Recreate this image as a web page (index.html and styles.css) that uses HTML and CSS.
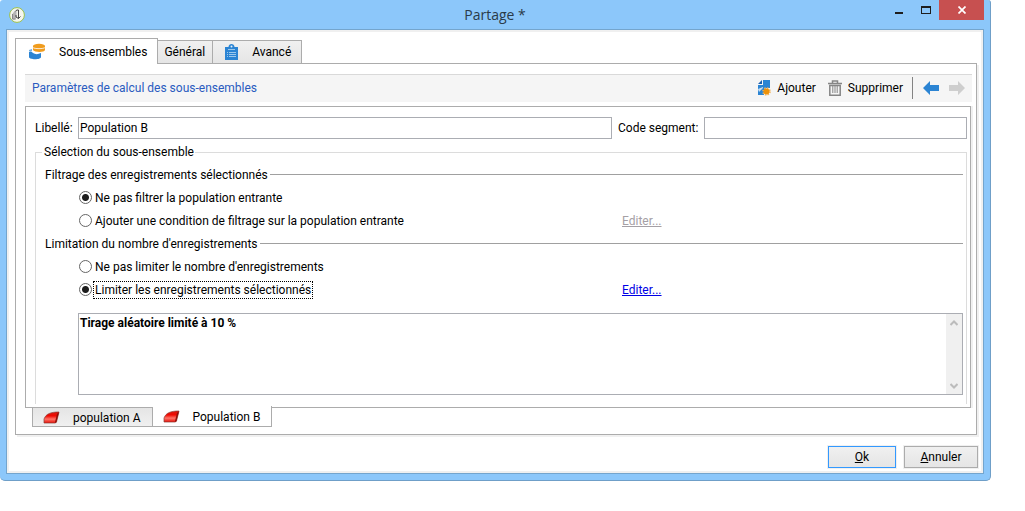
FILE: index.html
```html
<!DOCTYPE html>
<html lang="fr">
<head>
<meta charset="utf-8">
<title>Partage *</title>
<link rel="stylesheet" href="styles.css">
</head>
<body>
<div class="window">
  <header class="titlebar">
    <svg class="app-icon" width="16" height="16" viewBox="0 0 16 16"><circle cx="8" cy="8" r="7.400" fill="#f4f6ee" stroke="#9cc04a"/><path d="M3.500 7l2-3h2v6l-1 2.500h-3z" fill="#b4b4b4"/><path d="M3.500 7v5h3" fill="none" stroke="#888"/><path d="M9.500 3v8.500M6.500 4l1.500-1h1.500M7 8v2l2.500 1.500 2-2" fill="none" stroke="#444"/></svg>
    <h1 class="title">Partage *</h1>
    <div class="window-buttons">
      <button class="win-btn" type="button" aria-label="Réduire"><svg width="10" height="10" viewBox="0 0 10 10"><path d="M1 7h8v2H1z" fill="#1e1e1e"/></svg></button>
      <button class="win-btn" type="button" aria-label="Agrandir"><svg width="10" height="8" viewBox="0 0 10 8"><path d="M0 0h10v8H0zM1 2v5h8V2z" fill="#1e1e1e" fill-rule="evenodd"/></svg></button>
      <button class="win-btn close" type="button" aria-label="Fermer"><svg width="8" height="8" viewBox="0 0 8 8"><path d="M.5.5l7 7M7.500.5l-7 7" stroke="#fff" stroke-width="1.700"/></svg></button>
    </div>
  </header>
  <main class="client">
    <nav class="tabs">
      <button class="tab active" type="button"><svg width="17" height="17" viewBox="0 0 17 17"><path d="M1 9c2-1 3 0 4 1 2 1.500 5 1.500 8 0v4c0 3-12 3-12 0z" fill="#2b84d3"/><path d="M1 7l3-1v2H1z" fill="#6faee4"/><path d="M5 3v4c1 2.500 12 2.500 12 0V3z" fill="#f09c1e"/><ellipse cx="11" cy="2.800" rx="6" ry="2" fill="#f09c1e"/><path d="M5 4.500c1 1.500 11 1.500 12 0" fill="none" stroke="#fff" stroke-width=".8"/></svg>Sous-ensembles</button>
      <button class="tab plain" type="button">Général</button>
      <button class="tab" type="button"><svg width="13" height="16" viewBox="0 0 13 16"><path d="M0 3h3.500c0-4 6-4 6 0H13v13H0z" fill="#2b84d3"/><path d="M3 5.500h7M2 8.500h1m1 0h7M2 10.500h1m1 0h7M2 12.500h1m1 0h7" stroke="#9cc8ec"/><circle cx="6.500" cy="2.500" r="1" fill="#e8f0f7"/></svg>Avancé</button>
    </nav>
    <section class="panel">
      <div class="toolbar">
        <h2 class="toolbar-title">Paramètres de calcul des sous-ensembles</h2>
        <button class="tool" type="button"><svg width="13" height="16" viewBox="0 0 13 16"><path d="M5 0h7v8H8l-2 3v4H0V5h5z" fill="#2b84d3"/><path d="M0 4l4-4v4z" fill="#1b5fae"/><path d="M0 9l5-2v1l-4 4z" fill="#c7def2"/><circle cx="8.500" cy="11.500" r="3.500" fill="none" stroke="#f3b35a" stroke-width="1.600" stroke-dasharray="1.500 1.250"/><circle cx="8.500" cy="11.500" r="3" fill="#ee9208"/></svg>Ajouter</button>
        <button class="tool" type="button"><svg width="14" height="16" viewBox="0 0 14 16"><path d="M0 3.500h14M4.500 3V1h5v2M1.800 5.500v9.700h10.400V5.500z" fill="none" stroke="#858585" stroke-width="1.500"/><path d="M4.800 5v8M7 5v8M9.200 5v8" stroke="#858585"/></svg>Supprimer</button>
        <span class="separator"></span>
        <button class="tool arrow" type="button" aria-label="Précédent"><svg width="16" height="14" viewBox="0 0 16 14"><path d="M0 7l7-7v4h9v6H7v4z" fill="#2b84d3"/></svg></button>
        <button class="tool arrow" type="button" aria-label="Suivant" disabled><svg width="16" height="14" viewBox="0 0 16 14"><path d="M16 7L9 0v4H0v6h9v4z" fill="#cecece"/></svg></button>
      </div>
      <form class="subset">
        <div class="fields">
          <label class="field-label" for="libelle">Libellé:</label>
          <input class="field" id="libelle" type="text" value="Population B">
          <label class="field-label" for="code">Code segment:</label>
          <input class="field" id="code" type="text">
        </div>
        <fieldset class="group">
          <legend>Sélection du sous-ensemble</legend>
          <h3 class="rule">Filtrage des enregistrements sélectionnés</h3>
          <div class="row"><div class="choice"><input class="radio" type="radio" name="filtre" id="f1" checked><label for="f1">Ne pas filtrer la population entrante</label></div></div>
          <div class="row"><div class="choice"><input class="radio" type="radio" name="filtre" id="f2"><label for="f2">Ajouter une condition de filtrage sur la population entrante</label></div><a class="link disabled" href="#filtre" aria-disabled="true">Editer...</a></div>
          <h3 class="rule">Limitation du nombre d'enregistrements</h3>
          <div class="row"><div class="choice"><input class="radio" type="radio" name="limite" id="l1"><label for="l1">Ne pas limiter le nombre d'enregistrements</label></div></div>
          <div class="row"><div class="choice"><input class="radio" type="radio" name="limite" id="l2" checked><label class="focused" for="l2">Limiter les enregistrements sélectionnés</label></div><a class="link" href="#limite">Editer...</a></div>
          <div class="summary">
            <textarea class="summary-text" aria-label="Résumé de la limitation" readonly>Tirage aléatoire limité à 10 %</textarea>
            <div class="scrollbar"><svg width="8" height="6" viewBox="0 0 8 6"><path d="M.5 5L4 1.500 7.500 5" fill="none" stroke="#bcbcbc" stroke-width="2"/></svg><svg width="8" height="6" viewBox="0 0 8 6"><path d="M.5 1L4 4.500 7.500 1" fill="none" stroke="#bcbcbc" stroke-width="2"/></svg></div>
          </div>
        </fieldset>
      </form>
      <nav class="bottom-tabs">
        <button class="btab" type="button"><svg width="17" height="13" viewBox="0 0 17 13"><defs><linearGradient id="red" x2="0" y2="1"><stop offset="0" stop-color="#d81a10"/><stop offset=".35" stop-color="#f00800"/><stop offset=".65" stop-color="#ff7468"/><stop offset="1" stop-color="#e81008"/></linearGradient></defs><path d="M1 12V8c2-5 6-7 15-7l-2.500 10-1 1z" fill="url(#red)" stroke="#8a403a" stroke-opacity=".7"/><path d="M12 11l2-8 2-2-2.500 10-1 1z" fill="#8c1008"/></svg>population A</button>
        <button class="btab active" type="button"><svg width="17" height="13" viewBox="0 0 17 13"><path d="M1 12V8c2-5 6-7 15-7l-2.500 10-1 1z" fill="url(#red)" stroke="#8a403a" stroke-opacity=".7"/><path d="M12 11l2-8 2-2-2.500 10-1 1z" fill="#8c1008"/></svg>Population B</button>
      </nav>
    </section>
    <footer class="actions">
      <button class="btn default" type="button"><span><u>O</u>k</span></button>
      <button class="btn" type="button"><span><u>A</u>nnuler</span></button>
    </footer>
  </main>
</div>
</body>
</html>
```
FILE: styles.css
```css
* { box-sizing: border-box; }
body {
  margin: 0;
  background: #fff;
  color: #000;
  font: 12px/16px Roboto, "Open Sans", sans-serif;
}
button, input, textarea { font: inherit; color: inherit; }
button { padding: 0; }
h1, h2, h3 { margin: 0; font-size: inherit; font-weight: 400; }
svg { flex: none; }

.window {
  margin-right: 34px;
  padding: 0 6px 6px;
  background: #8cc7fa;
  border-right: 1px solid #6f9fc8;
  border-bottom: 1px solid #6f9fc8;
  border-radius: 3px 3px 5px 5px;
}
.titlebar {
  display: grid;
  grid-template-columns: 1fr auto 1fr;
  align-items: center;
  height: 29px;
}
.app-icon { margin-left: 3px; }
.title { font-family: "Open Sans", sans-serif; font-size: 14px; line-height: 20px; color: #2a3a48; }
.window-buttons { display: flex; justify-content: flex-end; align-self: start; }
.win-btn {
  display: flex;
  align-items: center;
  justify-content: center;
  width: 27px;
  height: 20px;
  border: 0;
  background: none;
}
.win-btn.close { width: 45px; background: #c75050; }

.client {
  padding: 6px 5px 5px 6px;
  border: 1px solid #74a5cd;
  box-shadow: inset 0 0 0 2px #f0f0f0;
  background: #fff;
}
.tabs { display: flex; align-items: flex-end; margin-bottom: -1px; padding-top: 2px; position: relative; }
.tab {
  display: flex;
  align-items: center;
  height: 24px;
  margin-left: -1px;
  padding: 0 10px 0 12px;
  gap: 14px;
  border: 1px solid #acacac;
  background: linear-gradient(#f0f0f0, #e5e5e5);
}
.tab.plain { padding: 0 7px 0 6px; }
.tab.active { height: 26px; margin-left: 2px; border-bottom: 0; background: #fff; }

.panel {
  margin: 0 1px 0 2px;
  padding: 10px 4px 7px 9px;
  border: 1px solid #acacac;
  box-shadow: 2px 2px #f0f0f0;
}
.toolbar {
  display: flex;
  align-items: center;
  height: 28px;
  margin-bottom: 4px;
  padding: 0 7px 1px;
  border-top: 1px solid #d9d9d9;
  background: #f5f5f5;
}
.toolbar-title { flex: 1; color: #2a5bbf; }
.tool {
  display: flex;
  align-items: center;
  gap: 6px;
  margin-right: 12px;
  border: 0;
  background: none;
}
.tool:nth-of-type(2) { margin-right: 9px; }
.separator { width: 1px; height: 22px; margin-right: 10px; background: #838383; }
.tool.arrow { margin-right: 10px; }
.tool.arrow:last-child { margin-right: 0; }

.subset {
  margin-right: 1px;
  padding: 10px 3px 3px 9px;
  border: 1px solid #acacac;
  box-shadow: 2px 0 #f0f0f0;
}
.fields {
  display: grid;
  grid-template-columns: 37px 534fr 80px 263fr;
  column-gap: 6px;
  align-items: center;
}
.field-label { white-space: nowrap; }
.field {
  width: 100%;
  min-width: 0;
  height: 22px;
  padding: 0 1px 1px;
  border: 1px solid #abadb3;
  background: #fff;
}
.group {
  min-width: 0;
  margin: 5px 0 0;
  padding: 3px 3px 9px 9px;
  border: 1px solid #dcdcdc;
  border-bottom: 0;
}
.group legend { margin-left: -3px; padding: 0 1px 0 2px; }
.rule { display: flex; align-items: center; gap: 2px; height: 23px; }
.rule::after { content: ""; flex: 1; height: 1px; background: #a0a0a0; }
.row { display: flex; align-items: center; height: 23px; padding-left: 34px; }
.choice { display: flex; align-items: center; flex: 0 1 543px; }
.choice label { padding: 1px 1px 0; border: 1px dotted transparent; line-height: 15px; }
.choice .focused { border-color: #000; }
.radio {
  appearance: none;
  width: 13px;
  height: 13px;
  margin: 0 1px 0 0;
  border: 1px solid #666;
  border-radius: 50%;
  background: #fff;
}
.radio:checked { background: radial-gradient(circle, #1c1c1c 3px, #fff 4px); }
.link { color: #0000e6; }
.link.disabled { color: #a5a0a5; }
.summary {
  display: flex;
  height: 82px;
  margin: 12px 0 0 33px;
  border: 1px solid #abadb3;
}
.summary-text {
  flex: 1;
  min-width: 0;
  padding: 1px;
  border: 0;
  outline: 0;
  resize: none;
  overflow: hidden;
  font-weight: 700;
}
.scrollbar {
  display: flex;
  flex-direction: column;
  align-items: center;
  justify-content: space-between;
  width: 16px;
  padding: 6px 0 5px;
  background: #f0f0f0;
}

.bottom-tabs { display: flex; align-items: flex-start; padding-left: 7px; margin-top: -2px; position: relative; }
.btab {
  display: flex;
  align-items: center;
  gap: 13px;
  height: 20px;
  margin-top: 1px;
  padding: 1px 11px 0 10px;
  border: 1px solid #acacac;
  background: linear-gradient(#e5e5e5, #f0f0f0);
}
.btab.active { height: 21px; margin: 0; border-top: 0; border-left: 0; background: #fff; }

.actions { display: flex; justify-content: flex-end; gap: 8px; margin-top: 11px; }
.btn {
  width: 74px;
  height: 22px;
  border: 1px solid #acacac;
  background: linear-gradient(#f0f0f0, #e5e5e5);
  box-shadow: 0 0 0 1px #f0f0f0;
}
.btn.default { width: 68px; border-color: #3399ff; }
```
